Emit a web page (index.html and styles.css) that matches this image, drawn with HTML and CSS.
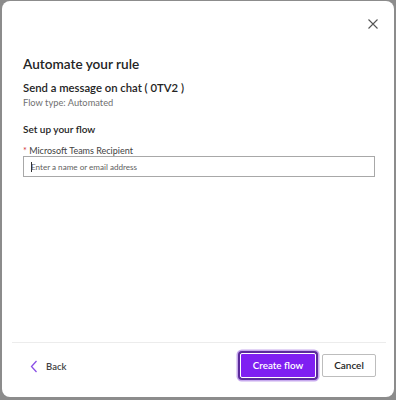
FILE: index.html
```html
<!DOCTYPE html>
<html lang="en">
<head>
  <meta charset="UTF-8" />
  <title>Automate your rule</title>
  <link rel="stylesheet" href="styles.css">
</head>
<body>
  <div class="dialog">
    <div class="topbar">
      <button class="closeBtn" aria-label="Close">
        <svg width="10" height="10" viewBox="0 0 10 10"><path d="M0.5 0.5 L9.5 9.5 M9.5 0.5 L0.5 9.5" stroke="#555" stroke-width="1.1" fill="none"/></svg>
      </button>
    </div>

    <div class="content">
      <h1>Automate your rule</h1>
      <h2>Send a message on chat ( 0TV2 )</h2>
      <p class="flowType">Flow type: Automated</p>

      <h3>Set up your flow</h3>
      <label for="recipient"><span class="req">*</span> Microsoft Teams Recipient</label>
      <div class="field">
        <span class="caret"></span>
        <input type="text" id="recipient" placeholder="Enter a name or email address" />
      </div>
    </div>

    <div class="footer">
      <button class="backBtn">
        <svg width="8" height="13" viewBox="0 0 8 13"><path d="M6.5 1 L1.5 6.5 L6.5 12" stroke="#8a4fe6" stroke-width="1.3" fill="none"/></svg>
        Back
      </button>
      <div class="actions">
        <button class="createBtn">Create flow</button>
        <button class="cancelBtn">Cancel</button>
      </div>
    </div>
  </div>
</body>
</html>
```

FILE: styles.css
```css
body {
  margin: 0;
  background: #8c8c8c;
  font-family: 'Lato', 'Open Sans', sans-serif;
  color: #242424;
}
.dialog {
  margin: 1px 2px 0 2px;
  height: 396px;
  background: #fff;
  border-radius: 8px;
  display: flex;
  flex-direction: column;
  box-sizing: border-box;
}
.topbar {
  display: flex;
  justify-content: flex-end;
  padding: 15px 13px 0 0;
  height: 40px;
  box-sizing: border-box;
}
.closeBtn {
  width: 16px;
  height: 16px;
  padding: 0;
  border: none;
  background: none;
  display: flex;
  align-items: center;
  justify-content: center;
}
.content {
  flex: 1;
  padding: 14px 19px 0 21px;
}
h1 {
  margin: 0;
  font-size: 13.6px;
  font-weight: 600;
  line-height: 19px;
}
h2 {
  margin: 6px 0 0;
  font-size: 11.3px;
  font-weight: 600;
  line-height: 16px;
}
.flowType {
  margin: 0;
  font-size: 9.3px;
  line-height: 14px;
  color: #707070;
}
h3 {
  margin: 12px 0 0;
  font-size: 10px;
  font-weight: 600;
  line-height: 14px;
}
label {
  display: block;
  margin-top: 9px;
  font-size: 9px;
  line-height: 11px;
  color: #424242;
}
.req { color: #d13438; }
.field {
  position: relative;
  height: 21px;
  border: 1px solid #a8a8a8;
  box-sizing: border-box;
  display: flex;
  align-items: center;
}
.caret {
  position: absolute;
  left: 7px;
  top: 5px;
  width: 1px;
  height: 10px;
  background: #333;
}
.field input {
  flex: 1;
  border: none;
  outline: none;
  padding: 0 0 0 7px;
  font-family: inherit;
  font-size: 8.1px;
  color: #242424;
  background: transparent;
}
.field input::placeholder { color: #616161; }
.footer {
  margin: 0 8px 0 10px;
  border-top: 1px solid #ececec;
  height: 55px;
  box-sizing: border-box;
  display: flex;
  align-items: center;
  justify-content: space-between;
  padding: 0 10px 10px 18px;
}
button { font-family: inherit; cursor: pointer; }
.backBtn {
  border: none;
  background: none;
  padding: 0;
  display: flex;
  align-items: center;
  gap: 8px;
  font-size: 9.5px;
  font-weight: 600;
  color: #424242;
  margin-top: 3px;
}
.actions {
  display: flex;
  align-items: center;
  gap: 6px;
}
.createBtn {
  width: 76px;
  height: 25px;
  border: 1px solid #fff;
  border-radius: 2px;
  background: #7f1ff2;
  color: #fff;
  font-size: 9.8px;
  font-weight: 600;
  box-shadow: 0 0 0 2px #5b2a9c, 0 0 0 3.5px #c7a9ee;
}
.cancelBtn {
  width: 54px;
  height: 23px;
  border: 1px solid #bdbdbd;
  border-radius: 2px;
  background: #fff;
  color: #242424;
  font-size: 10px;
  font-weight: 600;
}
```
